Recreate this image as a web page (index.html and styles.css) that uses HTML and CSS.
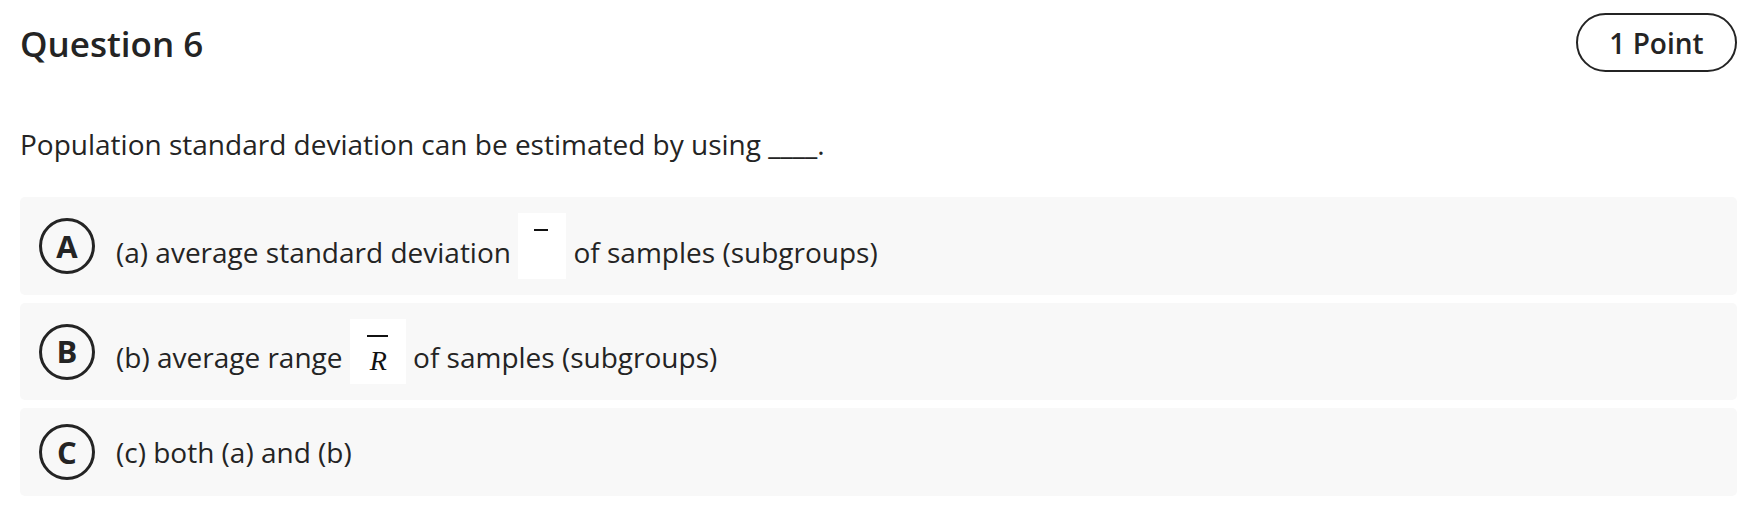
FILE: index.html
```html
<!DOCTYPE html>
<html lang="en">
<head>
<meta charset="utf-8">
<title>Question 6</title>
<link rel="stylesheet" href="styles.css">
</head>
<body>
<div class="page">
  <div class="header">
    <h2 class="title">Question 6</h2>
    <div class="points">1 Point</div>
  </div>
  <p class="prompt">Population standard deviation can be estimated by using ____.</p>
  <div class="options">
    <div class="option">
      <span class="letter">A</span>
      <span class="text">(a) average standard deviation <span class="math math-a"><span class="bar bar-short"></span></span> of samples (subgroups)</span>
    </div>
    <div class="option">
      <span class="letter">B</span>
      <span class="text">(b) average range <span class="math math-b"><span class="bar"></span><span class="var">R</span></span> of samples (subgroups)</span>
    </div>
    <div class="option">
      <span class="letter">C</span>
      <span class="text">(c) both (a) and (b)</span>
    </div>
  </div>
</div>
</body>
</html>
```
FILE: styles.css
```css
html, body {
  margin: 0;
  padding: 0;
  background: #ffffff;
}
body {
  font-family: "Open Sans", "Liberation Sans", sans-serif;
  color: #242424;
}
.page {
  padding: 13px 14px 0 20px;
}
.header {
  display: flex;
  justify-content: space-between;
  align-items: center;
}
.title {
  margin: 0;
  font-size: 35px;
  font-weight: 600;
  line-height: 49px;
  position: relative;
  top: 1px;
}
.points {
  box-sizing: border-box;
  height: 59px;
  width: 161px;
  border: 2px solid #242424;
  border-radius: 30px;
  display: flex;
  align-items: center;
  justify-content: center;
  font-size: 28px;
  font-weight: 600;
}
.prompt {
  margin: 53px 0 0 0;
  font-size: 28px;
  line-height: 38px;
}
.options {
  margin-top: 34px;
  display: flex;
  flex-direction: column;
  gap: 8px;
}
.option {
  display: flex;
  align-items: center;
  gap: 21px;
  background: #f8f8f8;
  border-radius: 5px;
  padding: 16px 19px;
}
.letter {
  box-sizing: border-box;
  flex: none;
  width: 56px;
  height: 56px;
  border: 3px solid #242424;
  border-radius: 50%;
  display: flex;
  align-items: center;
  justify-content: center;
  font-size: 31px;
  font-weight: 700;
  line-height: 1;
}
.text {
  font-size: 28px;
  line-height: 38px;
}
.math {
  display: inline-block;
  overflow: hidden;
  background: #ffffff;
  height: 66px;
  vertical-align: -16px;
  text-align: center;
}
.math-a {
  width: 48px;
}
.math-b {
  width: 56px;
  height: 65px;
}
.bar {
  display: block;
  width: 21px;
  height: 2px;
  margin: 16px auto 0;
  background: #111111;
}
.bar-short {
  width: 14px;
  margin-left: 16px;
}
.var {
  display: block;
  font-family: "Liberation Serif", "DejaVu Serif", serif;
  font-style: italic;
  font-size: 28px;
  line-height: 27px;
  margin-top: 10px;
  color: #111111;
  padding-left: 1px;
}
```
